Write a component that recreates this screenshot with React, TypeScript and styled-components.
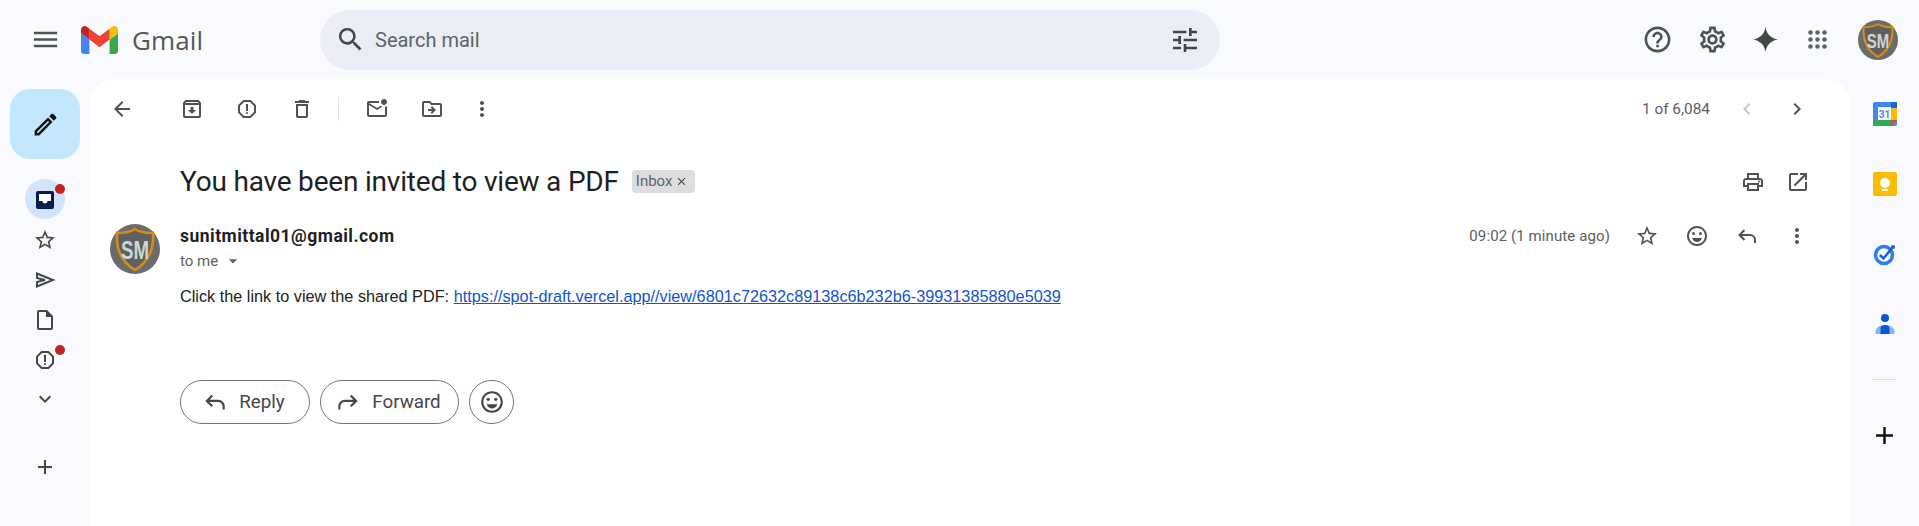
import React from "react";
import styled, { createGlobalStyle } from "styled-components";
import {
  MdMenu, MdSearch, MdTune, MdHelpOutline, MdOutlineSettings, MdArrowBack,
  MdOutlineArchive, MdOutlineReport, MdOutlineDelete, MdOutlineMarkEmailUnread,
  MdOutlineDriveFileMove, MdMoreVert, MdChevronLeft, MdChevronRight, MdOutlinePrint,
  MdOpenInNew, MdStarBorder, MdOutlineEmojiEmotions,
  MdOutlineInsertDriveFile, MdExpandMore, MdAdd, MdOutlineCreate,
  MdArrowDropDown, MdClose,
} from "react-icons/md";

const Global = createGlobalStyle`
  html, body { margin: 0; padding: 0; height: 100%; background: #f8fafd; overflow: hidden; }
  #root { height: 100%; }
`;

const Page = styled.div`
  width: 1919px; height: 526px; display: flex; flex-direction: column;
  background: #f8fafd; font-family: Roboto, "Liberation Sans", sans-serif; color: #1f1f1f;
`;
const Header = styled.header`
  height: 79px; flex: none; display: flex; align-items: center; padding-left: 25px;
`;
const Logo = styled.div`
  display: flex; align-items: center; margin-left: 16px; width: 239px; gap: 14px;
`;
const LogoName = styled.span`
  font-family: "Open Sans", sans-serif; font-size: 26px; color: #54575b; letter-spacing: 0.1px;
`;
const SearchBar = styled.div`
  width: 900px; height: 60px; border-radius: 30px; background: #e9eef6;
  display: flex; align-items: center; padding: 0 23px 0 18px; box-sizing: border-box;
`;
const SearchText = styled.span`
  flex: 1; margin-left: 13px; font-size: 20px; color: #5f6368;
`;
const HeaderRight = styled.div`
  display: flex; align-items: center; margin-left: 410px;
`;
const IconBox = styled.span<{ $w?: number; $c?: string; $s?: number }>`
  width: ${(p) => p.$w ?? 40}px; height: 40px; flex: none; display: flex;
  align-items: center; justify-content: center; color: ${(p) => p.$c ?? "#4f5254"};
  svg { width: ${(p) => p.$s ?? 24}px; height: ${(p) => p.$s ?? 24}px; display: block; flex: none; }
`;
const Body = styled.div`
  flex: 1; min-height: 0; display: flex;
`;
const Sidebar = styled.nav`
  width: 90px; flex: none; display: flex; flex-direction: column; align-items: center;
`;
const Compose = styled.div`
  width: 70px; height: 70px; border-radius: 20px; background: #c2e7ff; margin: 10px 0 20px;
  display: flex; align-items: center; justify-content: center; color: #111;
  svg { width: 29px; height: 29px; }
`;
const NavItem = styled.div<{ $active?: boolean; $h?: number }>`
  position: relative; width: 40px; height: ${(p) => p.$h ?? 40}px; flex: none; display: flex;
  align-items: center; justify-content: center; color: ${(p) => (p.$active ? "#041e49" : "#444746")};
  svg { width: 24px; height: 24px; position: relative; }
  &::before {
    content: ""; position: absolute; left: 0; top: 0; width: 40px; height: 40px; border-radius: 50%;
    background: ${(p) => (p.$active ? "#d3e3fd" : "transparent")};
  }
`;
const Dot = styled.i`
  position: absolute; right: 0; top: 5px; width: 10px; height: 10px; border-radius: 50%; background: #c5221f;
`;
const NavGap = styled.div`
  height: 29px; flex: none;
`;
const Main = styled.main`
  flex: 1; min-width: 0; background: #fff; border-radius: 24px 24px 0 0; display: flex; flex-direction: column;
`;
const Toolbar = styled.div`
  height: 60px; flex: none; display: flex; align-items: center; padding: 0 33px 0 12px;
`;
const Group = styled.div<{ $gap?: number; $ml?: number; $mt?: number }>`
  display: flex; align-items: center; gap: ${(p) => p.$gap ?? 15}px; margin-left: ${(p) => p.$ml ?? 0}px;
  margin-top: ${(p) => p.$mt ?? 0}px;
`;
const Divider = styled.span`
  width: 1px; height: 24px; background: #e3e3e3; margin: 0 16px; flex: none;
`;
const Count = styled.span`
  margin-left: auto; margin-right: 17px; font-size: 15.4px; color: #5e5e5e;
`;
const SubjectRow = styled.div`
  height: 44px; margin-top: 20px; flex: none; display: flex; align-items: center; padding: 0 32px 0 90px;
`;
const Subject = styled.h1`
  margin: 0; font-family: Roboto, sans-serif; font-weight: 400; font-size: 28px; letter-spacing: -0.2px; color: #1f1f1f;
`;
const Chip = styled.span`
  margin-left: 13px; height: 23px; width: 63px; box-sizing: border-box; border-radius: 4px; background: #dddddd;
  display: flex; align-items: center; padding-left: 4px; font-size: 15px; color: #5f6368;
  svg { width: 13px; height: 13px; margin-left: 3px; color: #444; flex: none; }
`;
const Spacer = styled.div`
  flex: 1;
`;
const Message = styled.article`
  display: flex; margin-top: 21px; padding: 0 33px 0 20px;
`;
const AvatarBox = styled.div`
  width: 50px; height: 50px; flex: none; margin-right: 20px;
  svg { display: block; width: 100%; height: 100%; }
`;
const Content = styled.div`
  flex: 1; min-width: 0;
`;
const MetaRow = styled.div`
  display: flex; align-items: center; height: 24px;
`;
const Sender = styled.span`
  font-size: 17.5px; font-weight: 700; color: #1f1f1f; letter-spacing: 0.48px;
`;
const Time = styled.span`
  margin-left: auto; margin-right: 17px; font-size: 15px; color: #5e5e5e; letter-spacing: 0.1px;
`;
const ToMe = styled.div`
  display: flex; align-items: center; font-size: 15px; color: #5e5e5e; height: 20px; margin-top: 3px;
  svg { width: 20px; height: 20px; margin-left: 5px; }
`;
const BodyText = styled.p`
  margin: 15px 0 0; font-family: "Liberation Sans", Arial, sans-serif; font-size: 16.25px; line-height: 20px; color: #222;
  a { color: #1155cc; text-decoration: underline; }
`;
const Actions = styled.div`
  display: flex; gap: 10px; margin-top: 74px;
`;
const ActionBtn = styled.div<{ $w: number; $pad?: number }>`
  width: ${(p) => p.$w}px; height: 44px; box-sizing: border-box; border: 1px solid #747775; border-radius: 22px;
  padding-right: ${(p) => p.$pad ?? 0}px;
  display: flex; align-items: center; justify-content: center; gap: 11px; font-size: 18.75px; color: #444746;
  svg { width: 26px; height: 26px; flex: none; }
`;
const Flip = styled.span`
  display: flex; transform: scaleX(-1);
`;
const Rail = styled.aside`
  width: 69px; flex: none; display: flex; flex-direction: column; align-items: center;
`;
const RailItem = styled.div<{ $h: number }>`
  height: ${(p) => p.$h}px; flex: none; display: flex; align-items: center; justify-content: center;
`;
const RailLine = styled.div`
  width: 25px; height: 1px; background: #dde1e6; margin: 20px 0 37px; flex: none;
`;

const Avatar = () => (
  <svg viewBox="0 0 50 50">
    <circle cx="25" cy="25" r="25" fill="#6a6b6d" />
    <path d="M25 5c4 3 10 4 18 4 1 15-3 28-18 37C10 37 6 24 7 9c8 0 14-1 18-4z" fill="#5f6062" stroke="#d98a12" strokeWidth="2.6" />
    <text x="25" y="35" textAnchor="middle" fontFamily="Liberation Sans, sans-serif" fontWeight="700" fontSize="25" textLength="28" lengthAdjust="spacingAndGlyphs" fill="#cdd5d2">SM</text>
  </svg>
);

const GmailLogo = () => (
  <svg width="37" height="28" viewBox="52 42 88 66">
    <path fill="#4285f4" d="M58 108h14V74L52 59v43c0 3.32 2.69 6 6 6" />
    <path fill="#34a853" d="M120 108h14c3.32 0 6-2.69 6-6V59l-20 15" />
    <path fill="#fbbc04" d="M120 48v26l20-15v-8c0-7.42-8.47-11.65-14.4-7.2" />
    <path fill="#ea4335" d="M72 74V48l24 18 24-18v26L96 92" />
    <path fill="#c5221f" d="M52 51v8l20 15V48l-5.6-4.2c-5.94-4.45-14.4-.22-14.4 7.2" />
  </svg>
);

const Sparkle = () => (
  <svg viewBox="0 0 24 24"><path fill="#444746" d="M12 0c1 6.5 5 11 12 12-7 1-11 5.500-12 12-1-6.500-5-11-12-12 7-1 11-5.500 12-12z" /></svg>
);

const AppsDots = () => (
  <svg viewBox="0 0 24 24" fill="#5f6368">
    {[4, 12, 20].map((y) =>
      [4, 12, 20].map((x) => <circle key={`${x}-${y}`} cx={x} cy={y} r="2.600" />)
    )}
  </svg>
);

const ReplyArrow = () => (
  <svg viewBox="0 0 24 24" fill="none" stroke="currentColor" strokeWidth="2">
    <path d="M9.500 6 4.500 11l5 5M4.500 11H15a5 5 0 0 1 5 5v3" />
  </svg>
);

const SendOutline = () => (
  <svg viewBox="0 0 24 24" fill="none" stroke="currentColor" strokeWidth="2" strokeLinejoin="miter">
    <path d="M4 5.500 20 12 4 18.500V14l8-2-8-2z" />
  </svg>
);

const InboxTray = () => (
  <svg viewBox="0 0 24 24">
    <rect x="3" y="3" width="18" height="18" rx="2" fill="#041e49" />
    <path d="M6 6h12v7h-3.500c0 1.400-1.100 2.500-2.500 2.500S9.500 14.400 9.500 13H6z" fill="#fff" />
  </svg>
);

const Calendar = () => (
  <svg width="24" height="24" viewBox="0 0 24 24">
    <rect x="0" y="0" width="24" height="24" rx="2" fill="#4285f4" />
    <rect x="18" y="0" width="6" height="6" fill="#1967d2" />
    <rect x="18" y="6" width="6" height="12" fill="#fbbc04" />
    <rect x="0" y="18" width="18" height="6" fill="#34a853" />
    <path d="M18 18h6l-6 6z" fill="#ea4335" />
    <rect x="5" y="5" width="13" height="13" fill="#fff" />
    <text x="11.500" y="15.500" textAnchor="middle" fontFamily="Roboto, sans-serif" fontWeight="700" fontSize="10" fill="#4285f4">31</text>
  </svg>
);

const Keep = () => (
  <svg width="24" height="24" viewBox="0 0 24 24">
    <rect width="24" height="24" rx="2" fill="#fbbc04" />
    <circle cx="12" cy="11" r="5" fill="#fff" />
    <rect x="9" y="17" width="6" height="2" fill="#fff" />
  </svg>
);

const Tasks = () => (
  <svg width="24" height="24" viewBox="0 0 24 24">
    <circle cx="11" cy="13" r="8.500" fill="none" stroke="#2f7df2" strokeWidth="3.500" />
    <path d="M7 13l3.500 3.500L19 6" fill="none" stroke="#1a5fd0" strokeWidth="2.500" />
    <circle cx="20" cy="5" r="2" fill="#1a5fd0" />
  </svg>
);

const Contacts = () => (
  <svg width="24" height="24" viewBox="0 0 24 24">
    <circle cx="12" cy="6" r="4" fill="#0b57d0" />
    <path d="M4 22c-1.500 0-2-1-1.500-3 .8-3 3-6 9.500-6s8.700 3 9.500 6c.5 2 0 3-1.500 3z" fill="#8fb3ee" />
    <path d="M7.500 22v-6c0-2 2-3 4.500-3s4.500 1 4.500 3v6z" fill="#0b57d0" />
  </svg>
);

export default function App() {
  return (
    <Page>
      <Global />
      <Header>
        <IconBox $s={31}><MdMenu /></IconBox>
        <Logo><GmailLogo /><LogoName>Gmail</LogoName></Logo>
        <SearchBar>
          <IconBox $c="#444746" $w={24} $s={31}><MdSearch /></IconBox>
          <SearchText>Search mail</SearchText>
          <IconBox $c="#444746" $w={24} $s={32}><MdTune /></IconBox>
        </SearchBar>
        <HeaderRight>
          <IconBox $w={55} $s={31}><MdHelpOutline /></IconBox>
          <IconBox $w={55} $s={31}><MdOutlineSettings /></IconBox>
          <IconBox $w={50} $s={25}><Sparkle /></IconBox>
          <IconBox $w={55} $s={21}><AppsDots /></IconBox>
          <Group $ml={13}>
            <IconBox $w={40} $s={40}><Avatar /></IconBox>
          </Group>
        </HeaderRight>
      </Header>
      <Body>
        <Sidebar>
          <Compose><MdOutlineCreate /></Compose>
          <NavItem $active $h={41}><InboxTray /><Dot /></NavItem>
          <NavItem><MdStarBorder /></NavItem>
          <NavItem><SendOutline /></NavItem>
          <NavItem><MdOutlineInsertDriveFile /></NavItem>
          <NavItem><MdOutlineReport /><Dot /></NavItem>
          <NavItem $h={38}><MdExpandMore /></NavItem>
          <NavGap />
          <NavItem><MdAdd /></NavItem>
        </Sidebar>
        <Main>
          <Toolbar>
            <IconBox><MdArrowBack /></IconBox>
            <Group $ml={30}>
              <IconBox><MdOutlineArchive /></IconBox>
              <IconBox><MdOutlineReport /></IconBox>
              <IconBox><MdOutlineDelete /></IconBox>
            </Group>
            <Divider />
            <Group $gap={15} $ml={2}>
              <IconBox><MdOutlineMarkEmailUnread /></IconBox>
              <IconBox><MdOutlineDriveFileMove /></IconBox>
              <IconBox $w={30}><MdMoreVert /></IconBox>
            </Group>
            <Count>1 of 6,084</Count>
            <Group $gap={10}>
              <IconBox $c="#c4c7c5"><MdChevronLeft /></IconBox>
              <IconBox><MdChevronRight /></IconBox>
            </Group>
          </Toolbar>
          <SubjectRow>
            <Subject>You have been invited to view a PDF</Subject>
            <Chip>Inbox<MdClose /></Chip>
            <Spacer />
            <Group $gap={5} $mt={2}>
              <IconBox><MdOutlinePrint /></IconBox>
              <IconBox><MdOpenInNew /></IconBox>
            </Group>
          </SubjectRow>
          <Message>
            <AvatarBox><Avatar /></AvatarBox>
            <Content>
              <MetaRow>
                <Sender>sunitmittal01@gmail.com</Sender>
                <Time>09:02 (1 minute ago)</Time>
                <Group $gap={10}>
                  <IconBox><MdStarBorder /></IconBox>
                  <IconBox><MdOutlineEmojiEmotions /></IconBox>
                  <IconBox><ReplyArrow /></IconBox>
                  <IconBox><MdMoreVert /></IconBox>
                </Group>
              </MetaRow>
              <ToMe>to me<MdArrowDropDown /></ToMe>
              <BodyText>
                Click the link to view the shared PDF:{" "}
                <a href="#">https://spot-draft.vercel.app//view/6801c72632c89138c6b232b6-39931385880e5039</a>
              </BodyText>
              <Actions>
                <ActionBtn $w={130} $pad={3}><ReplyArrow />Reply</ActionBtn>
                <ActionBtn $w={139} $pad={3}><Flip><ReplyArrow /></Flip>Forward</ActionBtn>
                <ActionBtn $w={45}><MdOutlineEmojiEmotions /></ActionBtn>
              </Actions>
            </Content>
          </Message>
        </Main>
        <Rail>
          <RailItem $h={70}><Calendar /></RailItem>
          <RailItem $h={70}><Keep /></RailItem>
          <RailItem $h={70}><Tasks /></RailItem>
          <RailItem $h={70}><Contacts /></RailItem>
          <RailLine />
          <RailItem $h={36}><IconBox $c="#111" $s={29}><MdAdd /></IconBox></RailItem>
        </Rail>
      </Body>
    </Page>
  );
}
